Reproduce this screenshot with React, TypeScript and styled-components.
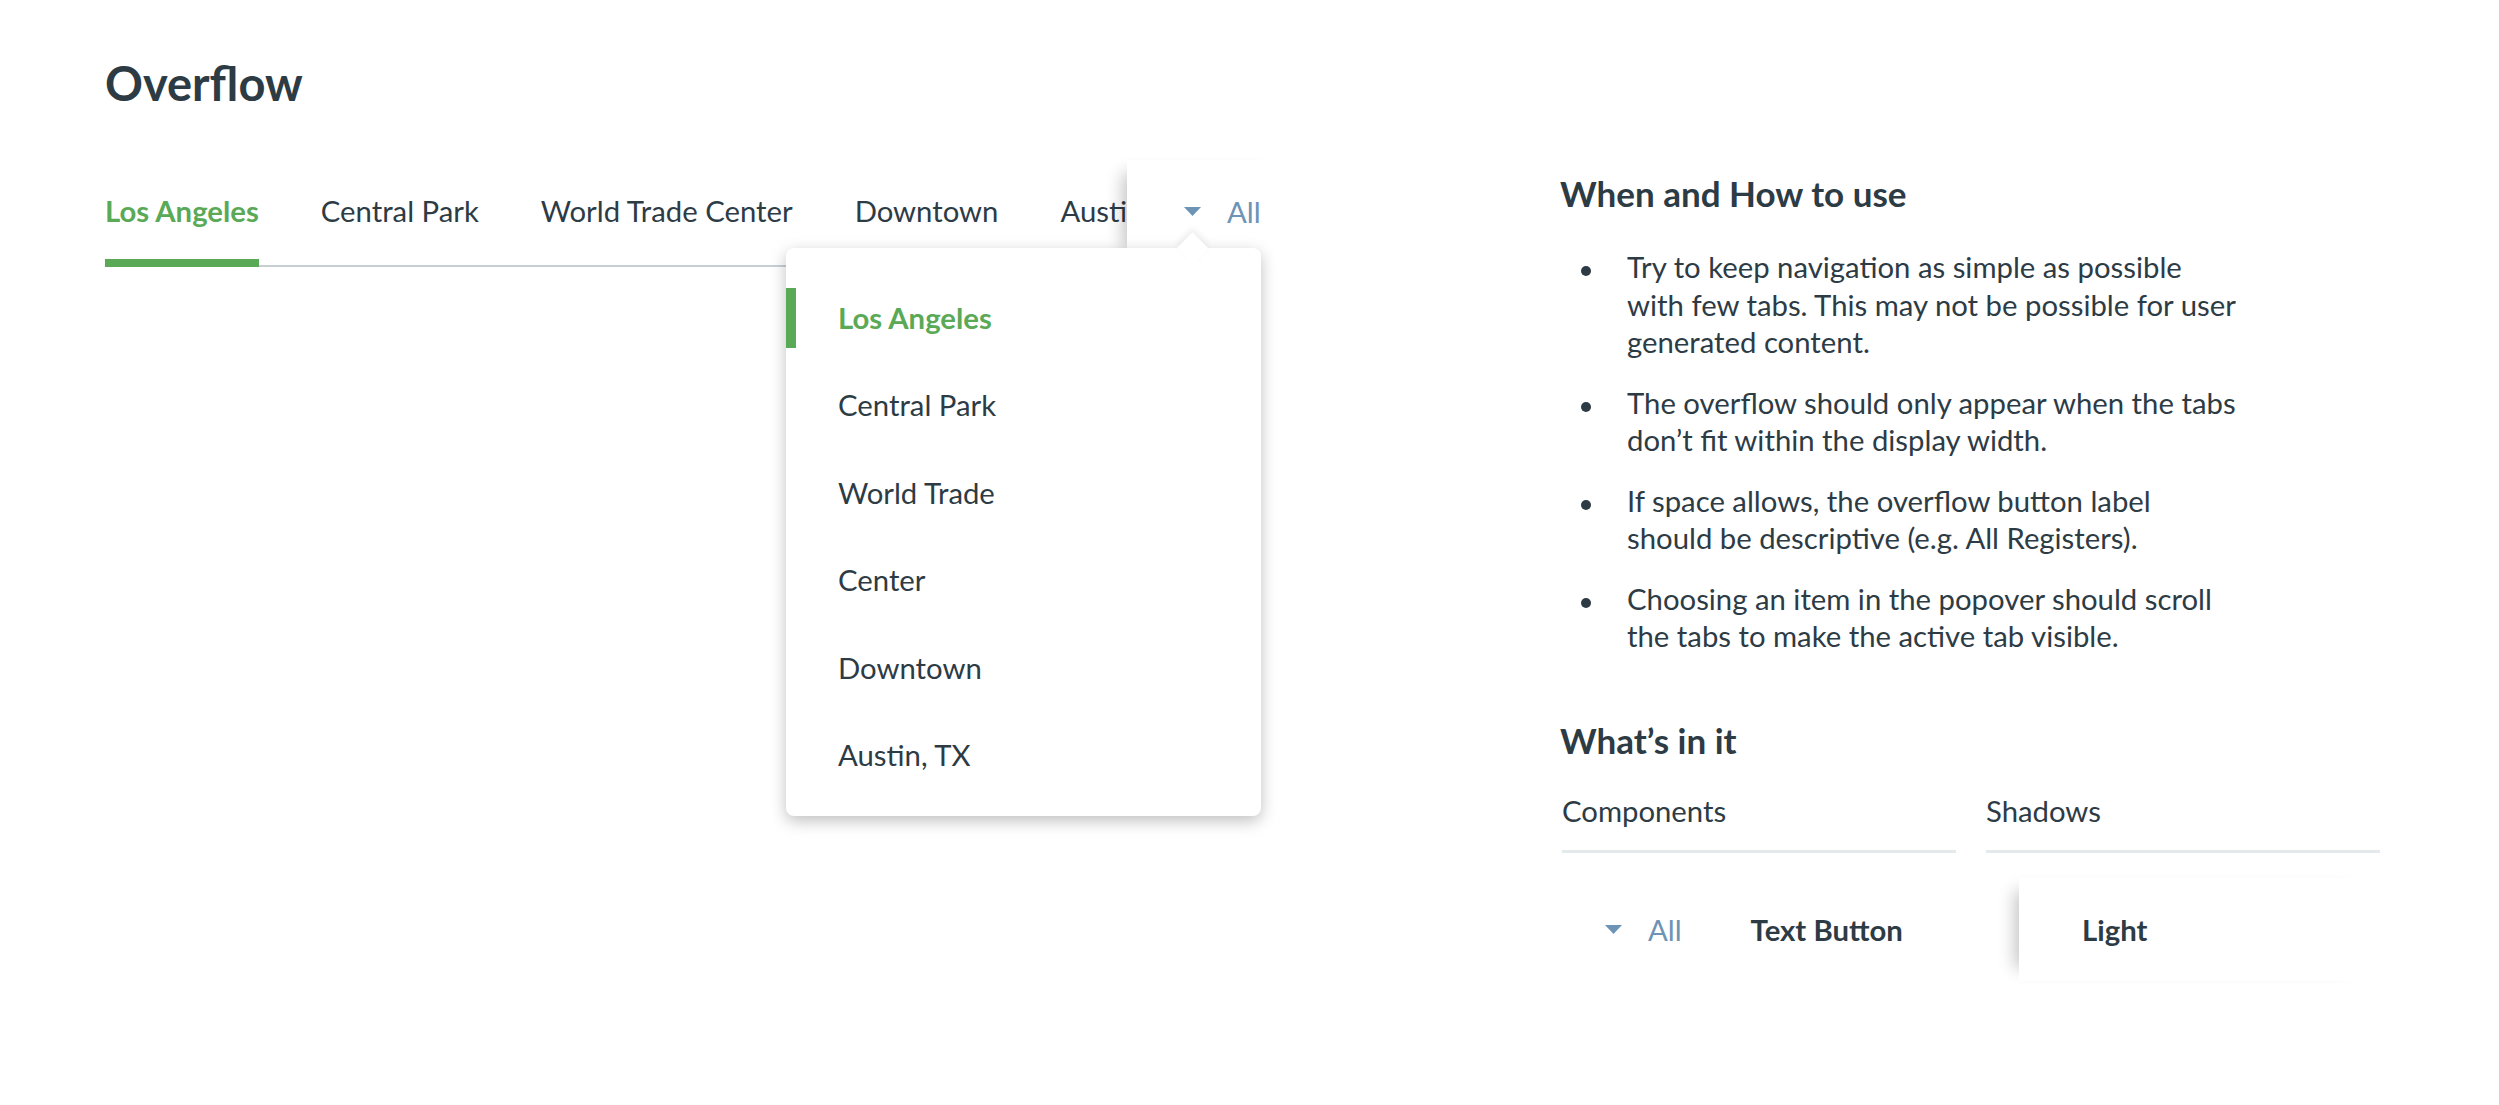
import React from "react";
import styled, { createGlobalStyle } from "styled-components";

const DARK = "#2d3b45";
const GREEN = "#5aa957";
const BLUE = "#6d93b5";
const TEXT = 29.3;
const EDGE_SHADOW = "-17px 0 16px -13px rgba(0, 0, 0, 0.24)";

const GlobalStyle = createGlobalStyle`
  html, body { margin: 0; padding: 0; background: #ffffff; }
  body { font-family: Lato, "Noto Sans", sans-serif; color: ${DARK}; }
  * { box-sizing: border-box; }
`;

const Page = styled.div`
  display: grid;
  grid-template-columns: 1455px 860px;
  padding-left: 105px;
  min-height: 1105px;
`;

const LeftCol = styled.section`
  padding-top: 55px;
`;

const Title = styled.h1`
  margin: 0;
  font-size: 47px;
  line-height: 57.6px;
  font-weight: 700;
  color: ${DARK};
`;

const TabBar = styled.nav`
  display: flex;
  align-items: flex-start;
  margin-top: 47px;
`;

const TabList = styled.div`
  display: flex;
  align-items: flex-end;
  gap: 62px;
  width: 1022px;
  height: 107px;
  flex-shrink: 0;
  overflow: hidden;
  background: linear-gradient(#c7cfd5, #c7cfd5) left bottom / 100% 2px no-repeat;
`;

const Tab = styled.div<{ $active?: boolean }>`
  position: relative;
  flex-shrink: 0;
  white-space: nowrap;
  font-size: ${TEXT}px;
  line-height: 35px;
  padding-bottom: 39px;
  font-weight: ${(p) => (p.$active ? 700 : 400)};
  color: ${(p) => (p.$active ? GREEN : DARK)};
  &::after {
    content: "";
    display: ${(p) => (p.$active ? "block" : "none")};
    position: absolute;
    left: 0;
    right: 0;
    bottom: 0;
    height: 8px;
    background: ${GREEN};
  }
`;

const OverflowButton = styled.button<{ $plain?: boolean }>`
  position: relative;
  flex-shrink: 0;
  height: 103px;
  display: flex;
  align-items: center;
  gap: 26px;
  padding: 0 ${(p) => (p.$plain ? "0" : "30px")} 0 ${(p) => (p.$plain ? "43px" : "57px")};
  border: 0;
  background: #ffffff;
  box-shadow: ${(p) => (p.$plain ? "none" : EDGE_SHADOW)};
  font-family: inherit;
  font-size: ${TEXT}px;
  line-height: 35px;
  color: ${BLUE};
  cursor: pointer;
`;

const Caret = styled.svg`
  display: block;
  width: 17px;
  height: 9px;
  flex-shrink: 0;
`;

const Popover = styled.div`
  position: absolute;
  top: 88px;
  left: -341px;
  width: 475px;
  padding: 26px 0 17px;
  background: #ffffff;
  border-radius: 8px;
  box-shadow: 0 5px 16px rgba(0, 0, 0, 0.25);
  z-index: 2;
  text-align: left;
  cursor: default;
  &::before {
    content: "";
    position: absolute;
    top: -11px;
    left: 395px;
    width: 23px;
    height: 23px;
    background: #ffffff;
    transform: rotate(45deg);
    box-shadow: -3px -3px 6px rgba(0, 0, 0, 0.07);
  }
`;

const MenuItem = styled.div<{ $active?: boolean }>`
  position: relative;
  padding-left: 52px;
  font-size: ${TEXT}px;
  line-height: 87.5px;
  font-weight: ${(p) => (p.$active ? 700 : 400)};
  color: ${(p) => (p.$active ? GREEN : DARK)};
  &::before {
    content: "";
    display: ${(p) => (p.$active ? "block" : "none")};
    position: absolute;
    left: 0;
    top: 14px;
    width: 10px;
    height: 60px;
    background: ${GREEN};
  }
`;

const MenuLabel = styled.span`
  display: inline-block;
  max-width: 210px;
`;

const RightCol = styled.section`
  padding-top: 172px;
`;

const SectionHeading = styled.h2<{ $gap?: number }>`
  margin: ${(p) => p.$gap ?? 0}px 0 0;
  font-size: 35px;
  line-height: 42px;
  font-weight: 700;
  color: ${DARK};
`;

const BulletList = styled.ul`
  list-style: none;
  margin: 34px 0 0;
  padding: 0 0 0 67px;
  width: 684px;
`;

const Bullet = styled.li`
  position: relative;
  font-size: ${TEXT}px;
  line-height: 37.5px;
  & + & {
    margin-top: 23px;
  }
  &::before {
    content: "";
    position: absolute;
    left: -46px;
    top: 18px;
    width: 10px;
    height: 10px;
    border-radius: 50%;
    background: ${DARK};
  }
`;

const ContentGrid = styled.div`
  display: grid;
  grid-template-columns: 394px 394px;
  column-gap: 30px;
  margin: 30px 0 0 2px;
`;

const ColumnHeader = styled.div`
  font-size: ${TEXT}px;
  line-height: 40px;
  padding-bottom: 19px;
  border-bottom: 3px solid #e4e9ec;
`;

const Sample = styled.div`
  height: 103px;
  margin-top: 25px;
  display: flex;
  align-items: center;
`;

const SampleLabel = styled.span<{ $offset?: number }>`
  margin-left: ${(p) => p.$offset ?? 0}px;
  font-size: ${TEXT}px;
  font-weight: 700;
  color: ${DARK};
`;

const ShadowBox = styled.div`
  flex: 1;
  height: 103px;
  margin-left: 33px;
  padding-left: 63px;
  display: flex;
  align-items: center;
  background: #ffffff;
  box-shadow: ${EDGE_SHADOW};
`;

const CaretIcon = () => (
  <Caret viewBox="0 0 17 9" aria-hidden="true">
    <polygon points="0,0 17,0 8.5,9" fill={BLUE} />
  </Caret>
);

const tabs = ["Los Angeles", "Central Park", "World Trade Center", "Downtown", "Austin, TX"];

export default function App() {
  return (
    <>
      <GlobalStyle />
      <Page>
        <LeftCol>
          <Title>Overflow</Title>
          <TabBar>
            <TabList>
              {tabs.map((t, i) => (
                <Tab key={t} $active={i === 0}>
                  {t}
                </Tab>
              ))}
            </TabList>
            <OverflowButton>
              <CaretIcon />
              <span>All</span>
              <Popover>
                {tabs.map((t, i) => (
                  <MenuItem key={t} $active={i === 0}>
                    <MenuLabel>{t}</MenuLabel>
                  </MenuItem>
                ))}
              </Popover>
            </OverflowButton>
          </TabBar>
        </LeftCol>
        <RightCol>
          <SectionHeading>When and How to use</SectionHeading>
          <BulletList>
            <Bullet>
              Try to keep navigation as simple as possible with few tabs. This may not be possible for user
              generated content.
            </Bullet>
            <Bullet>The overflow should only appear when the tabs don’t fit within the display width.</Bullet>
            <Bullet>
              If space allows, the overflow button label should{"\u00a0"}be descriptive (e.g. All Registers).
            </Bullet>
            <Bullet>Choosing an item in the popover should scroll the tabs to make the active tab visible.</Bullet>
          </BulletList>
          <SectionHeading $gap={64}>What’s in it</SectionHeading>
          <ContentGrid>
            <div>
              <ColumnHeader>Components</ColumnHeader>
              <Sample>
                <OverflowButton $plain>
                  <CaretIcon />
                  <span>All</span>
                </OverflowButton>
                <SampleLabel $offset={69}>Text Button</SampleLabel>
              </Sample>
            </div>
            <div>
              <ColumnHeader>Shadows</ColumnHeader>
              <Sample>
                <ShadowBox>
                  <SampleLabel>Light</SampleLabel>
                </ShadowBox>
              </Sample>
            </div>
          </ContentGrid>
        </RightCol>
      </Page>
    </>
  );
}
